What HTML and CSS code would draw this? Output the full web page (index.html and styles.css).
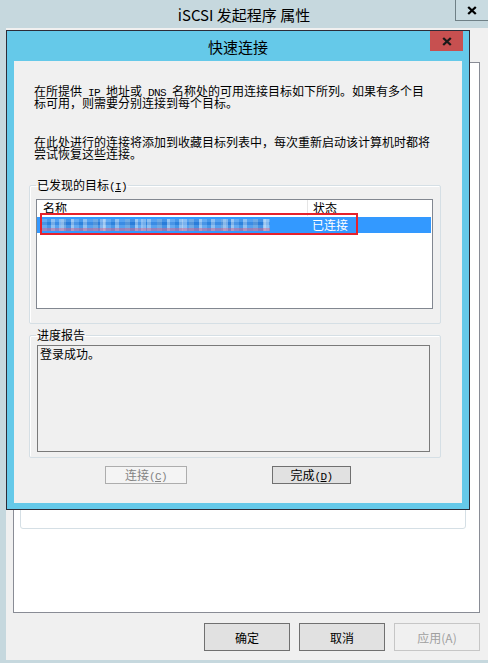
FILE: index.html
```html
<!DOCTYPE html>
<html lang="zh-CN">
<head>
    <meta charset="UTF-8">
    <meta name="viewport" content="width=device-width, initial-scale=1.0">
    <title>iSCSI 发起程序 属性</title>
    <link rel="stylesheet" href="styles.css">
</head>
<body>
    <div class="window">
        <div class="titlebar">
            <span class="title">iSCSI 发起程序 属性</span>
            <button class="close-btn" title="关闭">
                <svg width="10" height="9" viewBox="0 0 10 9"><path d="M1.2 1 L8.8 8 M8.8 1 L1.2 8" stroke="#000" stroke-width="2.3" fill="none"/></svg>
            </button>
        </div>

        <div class="window-body">
            <div class="tab-page">
                <div class="tab-group"></div>
            </div>
            <div class="button-row">
                <button class="btn">确定</button>
                <button class="btn">取消</button>
                <button class="btn" disabled>应用(A)</button>
            </div>
        </div>

        <!-- Quick connect dialog, shown on top of the properties window -->
        <div class="dialog">
            <div class="dialog-title">
                <span>快速连接</span>
                <button class="dialog-close" title="关闭">
                    <svg width="10" height="9" viewBox="0 0 10 9"><path d="M1.2 1 L8.8 8 M8.8 1 L1.2 8" stroke="#1a1a1a" stroke-width="2.3" fill="none"/></svg>
                </button>
            </div>

            <div class="dialog-client">
                <p class="note">在所提供<span class="half"> IP </span>地址或<span class="half"> DNS </span>名称处的可用连接目标如下所列。如果有多个目<br>标可用，则需要分别连接到每个目标。</p>
                <p class="note">在此处进行的连接将添加到收藏目标列表中，每次重新启动该计算机时都将<br>尝试恢复这些连接。</p>

                <fieldset class="group targets">
                    <legend>已发现的目标<span class="half">(<u>I</u>)</span></legend>
                    <div class="listview">
                        <div class="lv-header">
                            <span class="col-name">名称</span>
                            <span class="col-status">状态</span>
                        </div>
                        <div class="lv-row selected">
                            <span class="col-name"><span class="masked"></span></span>
                            <span class="col-status">已连接</span>
                        </div>
                        <div class="highlight"></div>
                    </div>
                </fieldset>

                <fieldset class="group progress">
                    <legend>进度报告</legend>
                    <div class="report">登录成功。</div>
                </fieldset>

                <div class="dialog-buttons">
                    <button class="small-btn connect-btn" disabled>连接<span class="half">(<u>C</u>)</span></button>
                    <button class="small-btn done-btn">完成<span class="half">(<u>D</u>)</span></button>
                </div>
            </div>
        </div>
    </div>
</body>
</html>
```

FILE: styles.css
```css
body {
    margin: 0;
    font-family: "Noto Sans CJK SC", "Noto Sans", sans-serif;
    font-size: 12px;
    color: #000;
    background-color: #c6d8de;
}

.window {
    position: relative;
    width: 488px;
    height: 663px;
    display: flex;
    flex-direction: column;
    background-color: #c6d8de;
    overflow: hidden;
}

.titlebar {
    position: relative;
    height: 28px;
    text-align: center;
}

.title {
    font-size: 15px;
    line-height: 30px;
}

.close-btn {
    position: absolute;
    top: 0;
    right: 0;
    width: 33px;
    height: 21px;
    padding: 0;
    border: none;
    border-left: 1px solid #6f8086;
    border-bottom: 1px solid #6f8086;
    background-color: #c9dbe1;
    display: flex;
    align-items: center;
    justify-content: center;
}

.window-body {
    flex: 1;
    margin: 0 0 3px 6px;
    padding: 34px 8px 9px 7px;
    background-color: #f0f0f0;
    display: flex;
    flex-direction: column;
}

.tab-page {
    height: 551px;
    box-sizing: border-box;
    border: 1px solid #898c95;
    background-color: #fff;
    padding: 17px 13px 0 6px;
}

.tab-group {
    height: 449px;
    box-sizing: border-box;
    border: 1px solid #d5dfe5;
    border-radius: 3px;
}

.button-row {
    margin-top: 10px;
    display: flex;
    justify-content: flex-end;
    gap: 9px;
}

.btn {
    width: 86px;
    height: 28px;
    font-family: inherit;
    font-size: 12px;
    color: #000;
    background-color: #e1e1e1;
    border: 1px solid #707070;
    padding: 0;
}

.btn:disabled {
    color: #a0a0a0;
    background-color: #f0f0f0;
    border-color: #c6c6c6;
}

/* Quick connect dialog */
.dialog {
    position: absolute;
    left: 6px;
    top: 30px;
    width: 464px;
    height: 480px;
    box-sizing: border-box;
    border: 1px solid #2c2c38;
    background-color: #65c9e9;
    display: flex;
    flex-direction: column;
}

.dialog-title {
    position: relative;
    height: 30px;
    display: flex;
    align-items: center;
    justify-content: center;
    font-size: 15px;
}

.dialog-close {
    position: absolute;
    top: 0;
    right: 6px;
    width: 33px;
    height: 20px;
    padding: 0;
    border: none;
    background-color: #c75050;
    display: flex;
    align-items: center;
    justify-content: center;
}

.dialog-client {
    flex: 1;
    margin: 0 7px 6px 7px;
    padding: 24px 21px 0 15px;
    background-color: #f0f0f0;
}

.note {
    margin: 0 0 27px 5px;
    line-height: 12px;
    white-space: nowrap;
}

/* half-width latin, 6px per character like the dialog font */
.half {
    font-family: "Liberation Mono", monospace;
    font-size: 11px;
    letter-spacing: -0.6px;
    line-height: 0;
    white-space: pre;
}

.group {
    margin: 0;
    min-inline-size: 0;
    border: 1px solid #d5dfe5;
    border-radius: 2px;
    box-shadow: inset 1px 1px 0 #fff;
}

.group legend {
    padding: 0 1px;
    line-height: 12px;
}

.targets {
    margin-top: -8px;
    padding: 8px 7px 14px 6px;
}

.listview {
    position: relative;
    height: 110px;
    box-sizing: border-box;
    border: 1px solid #828790;
    background-color: #fff;
}

.lv-header,
.lv-row {
    display: flex;
    height: 16px;
    line-height: 16px;
}

.lv-header .col-name {
    border-right: 1px solid #e5e5e5;
}

.col-name {
    width: 264px;
    padding-left: 6px;
    display: flex;
    align-items: center;
}

.col-status {
    padding-left: 5px;
}

.lv-row {
    margin: 1px 1px 0 0;
}

.selected {
    background-color: #3399ff;
    color: #fff;
}

/* blurred target name */
.masked {
    display: block;
    width: 228px;
    height: 12px;
    margin-left: -1px;
    background:
        linear-gradient(to bottom, rgba(255, 255, 255, 0) 0 9px, rgba(235, 120, 150, 0.5) 9px 12px),
        repeating-linear-gradient(90deg, rgba(255, 255, 255, 0) 0 17px, rgba(200, 225, 250, 0.45) 17px 22px, rgba(255, 255, 255, 0) 22px 41px),
        repeating-linear-gradient(to bottom, rgba(255, 255, 255, 0.12) 0 3px, rgba(20, 60, 140, 0.1) 3px 6px),
        repeating-linear-gradient(90deg, #4f9ff0 0 5px, #2f8ae6 5px 9px, #7fb8f0 9px 13px, #3f95ee 13px 19px, #5b9fe2 19px 24px, #2c84e2 24px 29px, #8cc0f2 29px 32px);
}

.highlight {
    position: absolute;
    left: 3px;
    top: 13px;
    width: 318px;
    height: 22px;
    box-sizing: border-box;
    border: 2px solid #e6212b;
}

.progress {
    margin-top: 5px;
    padding: 4px 10px 5px 6px;
}

.report {
    height: 107px;
    box-sizing: border-box;
    margin-left: 1px;
    padding: 2px 2px;
    border: 1px solid #7a7a7a;
    background-color: #f0f0f0;
    line-height: 12px;
}

.dialog-buttons {
    display: flex;
    margin: 8px 0 0 76px;
    gap: 85px;
}

.small-btn {
    height: 18px;
    padding: 0;
    font-family: inherit;
    font-size: 12px;
    line-height: 16px;
    color: #000;
    background-color: #e1e1e1;
    border: 1px solid #707070;
}

.connect-btn {
    width: 82px;
    color: #838383;
    background-color: #f4f4f4;
    border-color: #adadad;
}

.done-btn {
    width: 79px;
}
```
